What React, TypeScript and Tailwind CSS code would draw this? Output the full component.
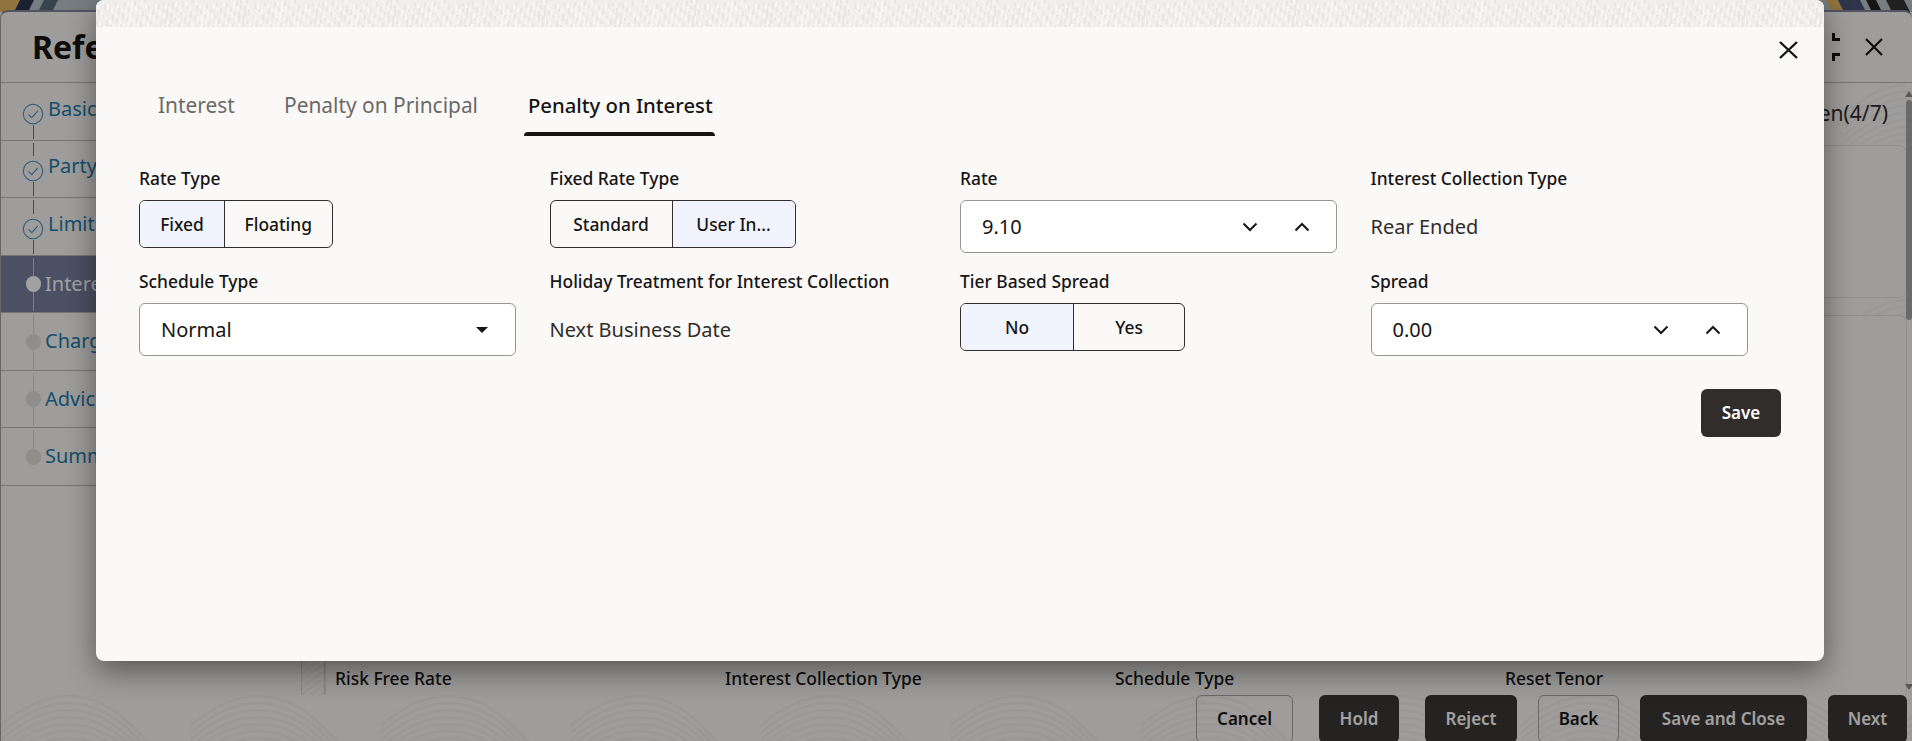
const font = { fontFamily: '"Noto Sans", sans-serif' }

const steps = [
  { name: 'Basic Details', state: 'done' },
  { name: 'Party Details', state: 'done' },
  { name: 'Limits', state: 'done' },
  { name: 'Interest', state: 'active' },
  { name: 'Charges', state: 'todo' },
  { name: 'Advices', state: 'todo' },
  { name: 'Summary', state: 'todo' },
]

// faint contour lines used by the app's background
function Waves({ id }: { id: string }) {
  return (
    <svg className="absolute inset-0 w-full h-full pointer-events-none" aria-hidden="true">
      <defs>
        <pattern id={id} width="190" height="90" patternUnits="userSpaceOnUse">
          {[0, 7, 14, 21, 28, 35, 42, 49, 56].map((o) => (
            <path
              key={o}
              d={`M-10 ${o + 40} C 40 ${o - 10}, 90 ${o - 10}, 130 ${o + 30} S 180 ${o + 80}, 200 ${o + 50}`}
              fill="none"
              stroke="#000"
              strokeOpacity="0.03"
              strokeWidth="2.5"
            />
          ))}
        </pattern>
      </defs>
      <rect width="100%" height="100%" fill={`url(#${id})`} />
    </svg>
  )
}

// the speckled band on top of the dialog
function Speckle() {
  const marks = Array.from({ length: 170 }, (_, i) => ({
    x: (i * 37) % 150,
    y: (i * 23) % 27,
    h: 3 + ((i * 7) % 6),
  }))
  return (
    <svg className="w-full h-[27px] block" aria-hidden="true">
      <defs>
        <pattern id="speckle" width="150" height="27" patternUnits="userSpaceOnUse">
          {marks.map((m, i) => (
            <rect key={i} x={m.x} y={m.y} width="2" height={m.h} fill={i % 2 ? '#f7f6f4' : '#e8e7e5'} />
          ))}
        </pattern>
      </defs>
      <rect width="100%" height="27" fill="#f0efed" />
      <rect width="100%" height="27" fill="url(#speckle)" />
    </svg>
  )
}

function TopStrip() {
  return (
    <svg className="w-full h-3 block" viewBox="0 0 1912 12" preserveAspectRatio="none" aria-hidden="true">
      <rect width="1912" height="12" fill="#b9c6cc" />
      <polygon points="0,0 20,0 14,12 0,12" fill="#e4b661" />
      <polygon points="20,0 34,0 28,12 14,12" fill="#2c3350" />
      <polygon points="44,0 58,0 52,12 38,12" fill="#5a6a78" />
      <polygon points="1826,0 1838,0 1844,12 1832,12" fill="#e4b661" />
      <polygon points="1838,0 1860,0 1866,12 1844,12" fill="#4a5578" />
      <polygon points="1866,0 1876,0 1882,12 1872,12" fill="#222" />
      <polygon points="1886,0 1904,0 1910,12 1892,12" fill="#333" />
    </svg>
  )
}

function Stepper() {
  return (
    <ul className="border-t border-[#bdbcbb]">
      {steps.map((step, i) => {
        const color = step.state === 'done' ? 'bg-[#3f8ab3]' : step.state === 'active' ? 'bg-[#c9c9cf]' : 'bg-[#d8d7d6]'
        return (
          <li
            key={step.name}
            className={`h-[57.5px] flex border-b border-[#bdbcbb] ${step.state === 'active' ? 'bg-[#777fa0]' : ''}`}
          >
            <div className="ml-[22px] w-5 shrink-0 flex flex-col items-center pt-[2px] pb-[1px]">
              <span className={`w-[1px] flex-1 ${i === 0 ? '' : color}`} />
              {step.state === 'done' ? (
                <svg width="22" height="22" viewBox="0 0 22 22" fill="none" className="shrink-0 mt-[4px]">
                  <circle cx="11" cy="11" r="9.7" stroke="#4a94bd" strokeWidth="1.1" />
                  <path d="M6.5 11.3 L9.8 14.6 L15.8 7.8" stroke="#4a94bd" strokeWidth="1.1" />
                </svg>
              ) : (
                <span className={`w-[15px] h-[16px] rounded-full shrink-0 ${step.state === 'active' ? 'bg-white' : 'bg-[#e2e1e0]'}`} />
              )}
              <span className={`w-[1px] flex-1 ${i === steps.length - 1 ? '' : color}`} />
            </div>
            {/* the dialog covers everything right of x=96 */}
            <span
              className={`text-[20px] whitespace-nowrap self-center overflow-hidden ${
                step.state === 'done'
                  ? 'ml-[5px] w-[49px] -mt-[5px] text-[#1f7dab]'
                  : step.state === 'active'
                    ? 'ml-[2px] w-[52px] text-white'
                    : 'ml-[2px] w-[52px] text-[#1f7dab]'
              }`}
            >
              {step.name}
            </span>
          </li>
        )
      })}
    </ul>
  )
}

function Background() {
  return (
    <div className="absolute inset-0 flex flex-col bg-[#fbf9f8] text-[#161513]">
      <TopStrip />
      <div className="flex-1 min-h-0 flex flex-col rounded-t-lg border-l border-t-2 border-l-[#a3a3a3] border-t-[#83869c] -mt-[2px] bg-[#fbf9f8]">
        <header className="h-[70px] shrink-0 flex items-center pl-[31px] pr-[29px]">
          <h1 className="text-[32px] font-bold w-[64px] overflow-hidden whitespace-nowrap">Reference Details</h1>
          <div className="ml-auto flex items-center gap-[25px]">
            <svg width="28" height="28" viewBox="0 0 28 28" fill="none" stroke="#161513" strokeWidth="3">
              <path d="M21.5 0v6.5H28M28 21.5h-6.5V28M6.5 0v6.5H0M0 21.5h6.5V28" />
            </svg>
            <svg width="18" height="18" viewBox="0 0 18 18" fill="none" stroke="#161513" strokeWidth="2.2">
              <path d="M1 1l16 16M17 1L1 17" />
            </svg>
          </div>
        </header>
        <div className="flex-1 min-h-0 flex">
          <aside className="w-[300px] shrink-0">
            <Stepper />
          </aside>
          <div className="relative w-[24px] shrink-0 border-x border-[#d8d7d6] overflow-hidden">
            <Waves id="wavesSide" />
          </div>
          <main className="flex-1 min-w-0 flex flex-col pr-[5px] border-t border-[#bdbcbb] relative">
            <div className="relative h-[62px] shrink-0 flex items-center justify-end pr-[19px]">
              <Waves id="wavesTop" />
              <span className="text-[21px] text-[#312d2a] w-[64px] overflow-hidden whitespace-nowrap flex justify-end">Screen(4/7)</span>
            </div>
            <div className="h-[153px] shrink-0 border border-[#e4e2e0] rounded-lg" />
            <div className="h-[17px] shrink-0 relative">
              <Waves id="wavesGap" />
            </div>
            <div className="flex-1 min-h-0 border border-b-0 border-[#e4e2e0] rounded-t-lg flex flex-col justify-end pb-[6px]">
              <div className="grid grid-cols-4 pl-[9px] w-[1569px] text-[17.4px] font-medium h-[22px] leading-[22px]">
                <span>Risk Free Rate</span>
                <span>Interest Collection Type</span>
                <span>Schedule Type</span>
                <span>Reset Tenor</span>
              </div>
            </div>
            <div className="absolute right-0 top-[8px] bottom-[5px] w-[6px] flex flex-col items-center">
              <span className="w-0 h-0 border-x-[4px] border-x-transparent border-b-[6px] border-b-[#8a8a8a]" />
              <span className="mt-[3px] w-[6px] h-[220px] rounded-full bg-[#a9a9a9]" />
              <span className="mt-auto w-0 h-0 border-x-[4px] border-x-transparent border-t-[6px] border-t-[#8a8a8a]" />
            </div>
          </main>
        </div>
        <footer className="relative h-[46px] shrink-0 flex items-start justify-end pr-[5px] gap-[21px] overflow-hidden">
          <Waves id="wavesBottom" />
          <FooterButton label="Cancel" width="w-[97px]" outline className="mr-[5px]" />
          <FooterButton label="Hold" width="w-[80px]" className="mr-[5px]" />
          <FooterButton label="Reject" width="w-[92px]" />
          <FooterButton label="Back" width="w-[81px]" outline />
          <FooterButton label="Save and Close" width="w-[167px]" />
          <FooterButton label="Next" width="w-[79px]" />
        </footer>
      </div>
    </div>
  )
}

function FooterButton({ label, width, outline, className = '' }: { label: string; width: string; outline?: boolean; className?: string }) {
  return (
    <button
      className={`relative h-[48px] shrink-0 rounded-md text-[17px] font-semibold ${width} ${className} ${
        outline ? 'border border-[#a8a6a4] text-[#161513]' : 'bg-[#3a3836] text-white'
      }`}
    >
      {label}
    </button>
  )
}

function Label({ children }: { children: React.ReactNode }) {
  return <div className="h-[20px] leading-[20px] mb-[12px] text-[17.4px] font-medium text-[#161513] whitespace-nowrap">{children}</div>
}

function Toggle({ options, selected, widths }: { options: string[]; selected: number; widths: string[] }) {
  return (
    <div className="inline-flex h-[48px] rounded-md border border-[#312d2a] overflow-hidden">
      {options.map((o, i) => (
        <div
          key={o}
          className={`flex items-center justify-center text-[17.4px] font-medium text-[#161513] ${widths[i]} ${i > 0 ? 'border-l border-[#312d2a]' : ''} ${
            i === selected ? 'bg-[#f1f4fd]' : ''
          }`}
        >
          {o}
        </div>
      ))}
    </div>
  )
}

function Chevron({ up }: { up?: boolean }) {
  return (
    <svg width="16" height="10" viewBox="0 0 16 10" fill="none" stroke="#161513" strokeWidth="2">
      <path d={up ? 'M1.5 8.5L8 2l6.5 6.5' : 'M1.5 1.5L8 8l6.5-6.5'} />
    </svg>
  )
}

function NumberInput({ value }: { value: string }) {
  return (
    <div className="h-[53px] rounded-md border border-[#989694] bg-white flex items-center pl-[21px] pr-[26px]">
      <span className="text-[20px] text-[#161513] flex-1">{value}</span>
      <span className="flex items-center gap-[36px]">
        <Chevron />
        <Chevron up />
      </span>
    </div>
  )
}

function Value({ children }: { children: React.ReactNode }) {
  return <div className="h-[53px] flex items-center text-[20px] text-[#312d2a]">{children}</div>
}

function Dialog() {
  return (
    <div className="absolute left-[96px] top-0 w-[1728px] h-[661px] rounded-lg overflow-hidden bg-[#fbf9f8] shadow-[0_10px_30px_rgba(0,0,0,0.45)]">
      <Speckle />
      <button className="absolute right-[26px] top-[41px]" aria-label="Close">
        <svg width="19" height="18" viewBox="0 0 19 18" fill="none" stroke="#161513" strokeWidth="2.4">
          <path d="M1 1l17 16M18 1L1 17" />
        </svg>
      </button>

      {/* tabs */}
      <div className="mt-[53px] pl-[58px] flex h-[56px] text-[20.9px]">
        <div className="w-[83px] px-[4px] flex items-center pb-[4px] text-[#6b6966] whitespace-nowrap">Interest</div>
        <div className="ml-[43px] w-[202px] px-[4px] flex items-center pb-[4px] text-[#6b6966] whitespace-nowrap">Penalty on Principal</div>
        <div className="relative ml-[42px] w-[191px] px-[4px] flex items-center pb-[6px] font-medium text-[20.3px] text-[#161513] whitespace-nowrap">
          Penalty on Interest
          <span className="absolute left-0 right-0 bottom-0 h-[4px] bg-[#161513] rounded-t-[4px]" />
        </div>
      </div>

      {/* form */}
      <div className="mt-[32px] pl-[43px] grid grid-cols-[repeat(4,377px)] gap-x-[33.5px] gap-y-[18px]">
        <div>
          <Label>Rate Type</Label>
          <Toggle options={['Fixed', 'Floating']} selected={0} widths={['w-[84px]', 'w-[107.5px]']} />
        </div>
        <div>
          <Label>Fixed Rate Type</Label>
          <Toggle options={['Standard', 'User In...']} selected={1} widths={['w-[121px]', 'w-[123px]']} />
        </div>
        <div>
          <Label>Rate</Label>
          <NumberInput value="9.10" />
        </div>
        <div>
          <Label>Interest Collection Type</Label>
          <Value>Rear Ended</Value>
        </div>
        <div>
          <Label>Schedule Type</Label>
          <div className="h-[53px] rounded-md border border-[#989694] bg-white flex items-center pl-[21px] pr-[27px]">
            <span className="text-[20px] text-[#161513] flex-1">Normal</span>
            <span className="w-0 h-0 border-x-[6px] border-x-transparent border-t-[6px] border-t-[#161513]" />
          </div>
        </div>
        <div>
          <Label>Holiday Treatment for Interest Collection</Label>
          <Value>Next Business Date</Value>
        </div>
        <div>
          <Label>Tier Based Spread</Label>
          <Toggle options={['No', 'Yes']} selected={0} widths={['w-[112px]', 'w-[111px]']} />
        </div>
        <div>
          <Label>Spread</Label>
          <NumberInput value="0.00" />
        </div>
      </div>

      <div className="mt-[33px] pr-[43px] flex justify-end">
        <button className="w-[80px] h-[48px] rounded-md bg-[#312d2a] text-white text-[17px] font-semibold">Save</button>
      </div>
    </div>
  )
}

export default function App() {
  return (
    <div className="relative w-[1912px] h-[741px] overflow-hidden" style={font}>
      <Background />
      <div className="absolute inset-0 bg-black/[0.37]" />
      <Dialog />
    </div>
  )
}
